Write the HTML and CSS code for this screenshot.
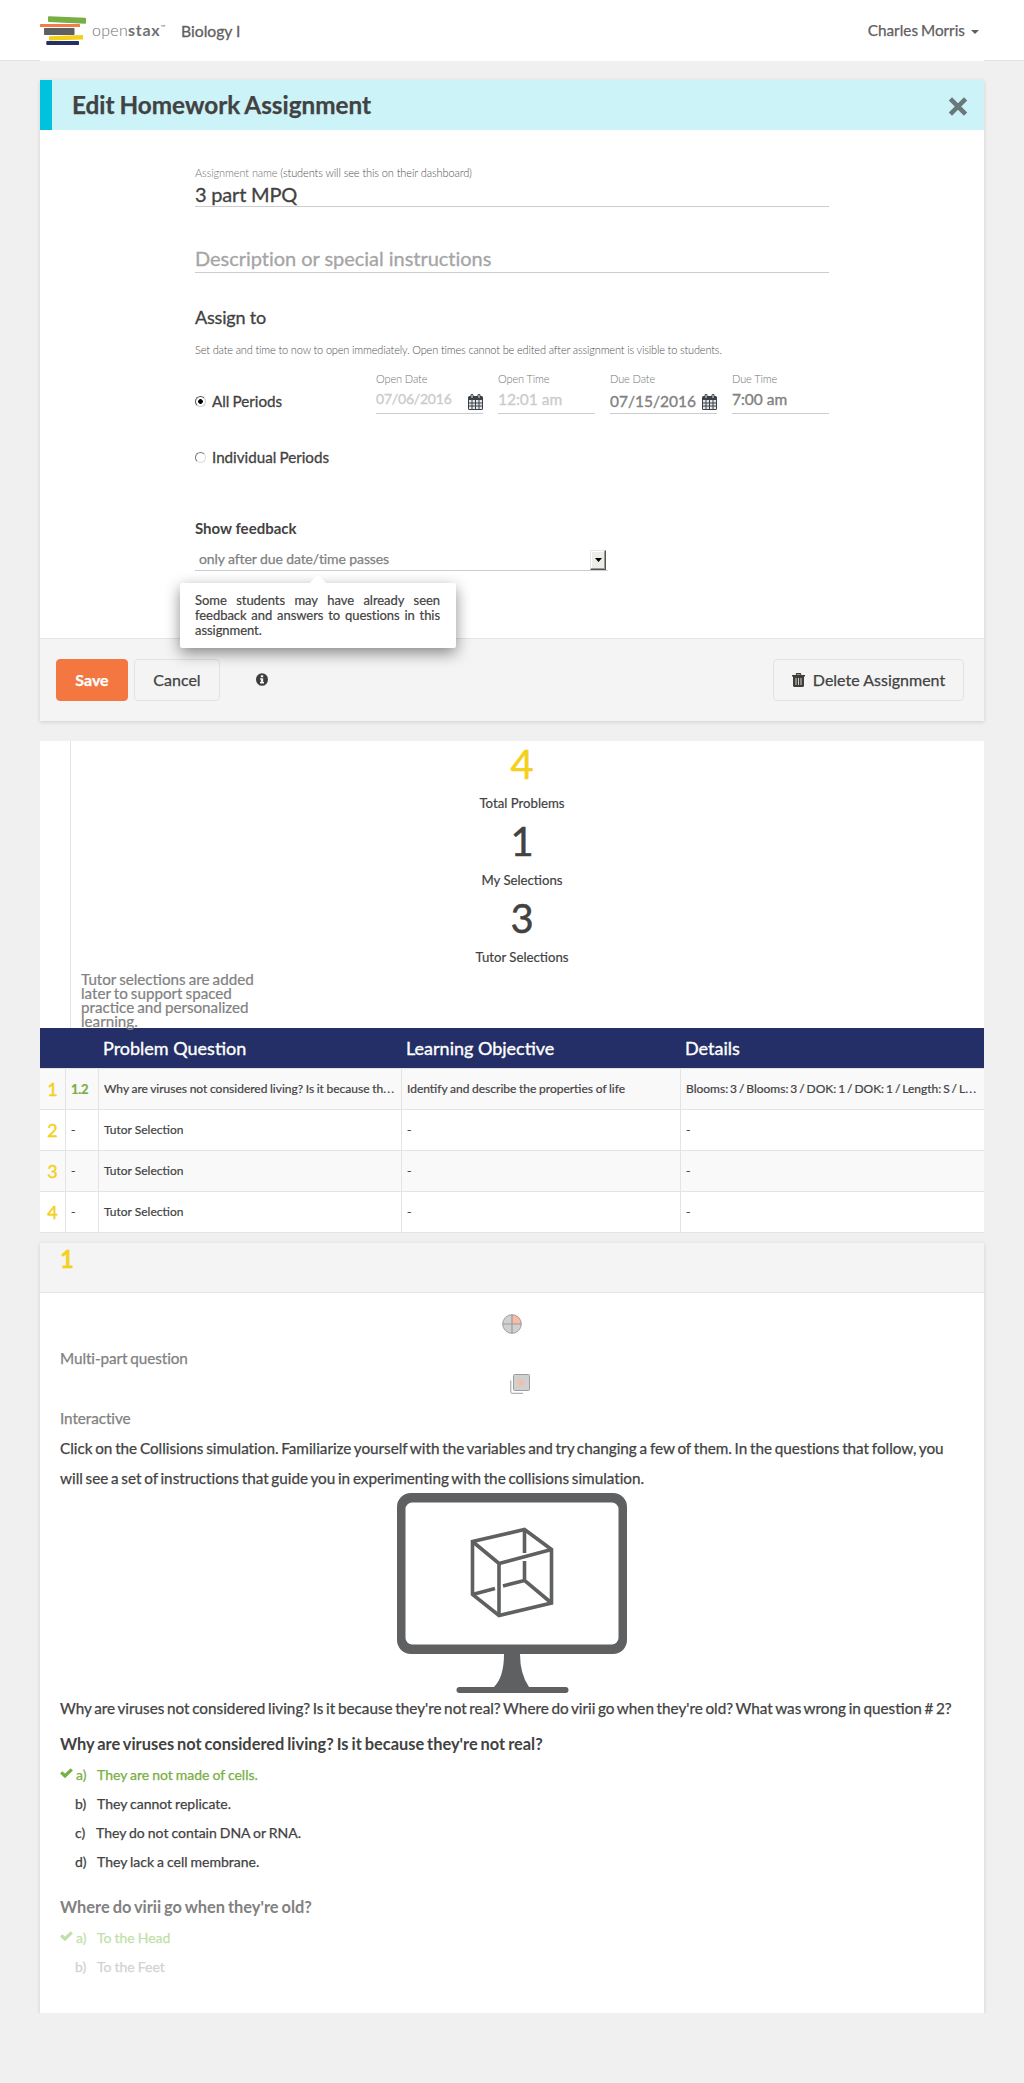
FILE: index.html
```html
<!DOCTYPE html>
<html lang="en">
<head>
<meta charset="utf-8">
<title>Edit Homework Assignment</title>
<link rel="stylesheet" href="styles.css">
</head>
<body>
<header class="navbar">
  <div class="navbar-inner">
    <svg class="logo" width="47" height="30" viewBox="0 0 47 30">
      <path fill="#77af42" d="M9 0.2 L45 1.8 Q46 1.9 46 2.8 L46 6.8 Q46 7.8 45 7.8 L9 6 Q8 6 8 5 L8 1 Q8 0.2 9 0.2Z"/>
      <rect x="0" y="8" width="40" height="3" rx=".5" fill="#f47c4b"/>
      <rect x="4" y="12" width="30.500" height="7" rx=".8" fill="#5f6062"/>
      <path fill="#f4d019" d="M9.500 20.200 L42.500 19 Q43 19 43 19.500 L43 23 Q43 23.600 42.500 23.600 L9.500 24.500 Q9 24.500 9 24 L9 20.800 Q9 20.200 9.500 20.200Z"/>
      <rect x="6.300" y="25" width="32.700" height="4" rx=".7" fill="#232f66"/>
    </svg>
    <span class="brand"><span class="brand-open">open</span><span class="brand-stax">stax</span><sup class="brand-tm">™</sup></span>
    <span class="course">Biology I</span>
    <span class="user">Charles Morris<i class="caret"></i></span>
  </div>
</header>

<main class="container">
  <section class="panel plan">
    <div class="plan-head">
      <h1 class="plan-title">Edit Homework Assignment</h1>
      <svg class="close" width="20" height="19" viewBox="0 0 20 19"><path d="M2.400 1.900 L17.600 17.100 M17.600 1.900 L2.400 17.100" stroke="#697878" stroke-width="4.600" stroke-linecap="butt"/></svg>
    </div>
    <div class="plan-body">
      <div class="small-label">Assignment name <span class="hint">(students will see this on their dashboard)</span></div>
      <div class="text-input name-input">3 part MPQ</div>
      <div class="text-input desc-input">Description or special instructions</div>
      <h2 class="assign-title">Assign to</h2>
      <p class="assign-note">Set date and time to now to open immediately. Open times cannot be edited after assignment is visible to students.</p>
      <div class="period-row">
        <div class="radio-row"><span class="radio checked"></span><span>All Periods</span></div>
        <div class="field"><span class="field-label">Open Date</span><span class="field-value open-date">07/06/2016</span>
          <svg class="calendar" width="15" height="16" viewBox="0 0 15 16"><path fill="#3b4046" d="M0 3.500 Q0 2 1.500 2 H2.500 V1.200 Q2.500 0 4 0 Q5.500 0 5.500 1.200 V2 H9.500 V1.200 Q9.500 0 11 0 Q12.500 0 12.500 1.200 V2 H13.500 Q15 2 15 3.500 V14.500 Q15 16 13.500 16 H1.500 Q0 16 0 14.500Z"/><path stroke="#e8ecf2" stroke-width="1" fill="none" d="M4 1V4M11 1V4"/><path fill="#e4e8ee" d="M1 6h2.500v2.500H1zM4.500 6h2.500v2.500H4.500zM8 6h2.500v2.500H8zM11.500 6h2.500v2.500h-2.500zM1 9.500h2.500v2H1zM4.500 9.500h2.500v2H4.500zM8 9.500h2.500v2H8zM11.500 9.500h2.500v2h-2.500zM1 12.500h2.500v2.500H1zM4.500 12.500h2.500v2.500H4.500zM8 12.500h2.500v2.500H8zM11.500 12.500h2.500v2.500h-2.500z"/></svg></div>
        <div class="field"><span class="field-label">Open Time</span><span class="field-value open-time">12:01 am</span></div>
        <div class="field"><span class="field-label">Due Date</span><span class="field-value due-date">07/15/2016</span>
          <svg class="calendar" width="15" height="16" viewBox="0 0 15 16"><path fill="#3b4046" d="M0 3.500 Q0 2 1.500 2 H2.500 V1.200 Q2.500 0 4 0 Q5.500 0 5.500 1.200 V2 H9.500 V1.200 Q9.500 0 11 0 Q12.500 0 12.500 1.200 V2 H13.500 Q15 2 15 3.500 V14.500 Q15 16 13.500 16 H1.500 Q0 16 0 14.500Z"/><path stroke="#e8ecf2" stroke-width="1" fill="none" d="M4 1V4M11 1V4"/><path fill="#e4e8ee" d="M1 6h2.500v2.500H1zM4.500 6h2.500v2.500H4.500zM8 6h2.500v2.500H8zM11.500 6h2.500v2.500h-2.500zM1 9.500h2.500v2H1zM4.500 9.500h2.500v2H4.500zM8 9.500h2.500v2H8zM11.500 9.500h2.500v2h-2.500zM1 12.500h2.500v2.500H1zM4.500 12.500h2.500v2.500H4.500zM8 12.500h2.500v2.500H8zM11.500 12.500h2.500v2.500h-2.500z"/></svg></div>
        <div class="field"><span class="field-label">Due Time</span><span class="field-value due-time">7:00 am</span></div>
      </div>
      <div class="radio-row individual"><span class="radio"></span><span>Individual Periods</span></div>
      <div class="feedback-title">Show feedback</div>
      <div class="select">
        <span class="select-value">only after due date/time passes</span>
        <span class="select-button"><svg width="7" height="4" viewBox="0 0 7 4"><path d="M0 0h7L3.500 4z"/></svg></span>
        <div class="tooltip">Some students may have already seen feedback and answers to questions in this assignment.</div>
      </div>
    </div>
    <footer class="plan-footer">
      <span class="btn btn-save">Save</span>
      <span class="btn btn-cancel">Cancel</span>
      <svg class="info" width="12" height="13" viewBox="0 0 12 13"><ellipse cx="6" cy="6.500" rx="6" ry="6.300" fill="#3d3d3d"/><path fill="#f4f4f4" d="M4.800 2.200h2.400v2H4.800zM4 5.200h3.200v3.800H8v1.400H4V9h.8V6.500H4z"/></svg>
      <span class="btn btn-delete"><svg width="13" height="14" viewBox="0 0 13 14"><path fill="#3d3d3d" d="M0 2h3.800V1Q3.800 0 4.800 0h3.400Q9.200 0 9.200 1v1H13v1.600h-1V12.500Q12 14 10.500 14h-8Q1 14 1 12.500V3.600H0z"/><path fill="#999" d="M4.800 1h3.400v1H4.800z"/><path stroke="#d8d2c4" d="M4 5v7M6.500 5v7M9 5v7"/></svg>Delete Assignment</span>
    </footer>
  </section>

  <section class="summary">
    <div class="stats">
      <div class="stat-number total">4</div><div class="stat-label">Total Problems</div>
      <div class="stat-number">1</div><div class="stat-label">My Selections</div>
      <div class="stat-number">3</div><div class="stat-label">Tutor Selections</div>
      <p class="tutor-note">Tutor selections are added<br>later to support spaced<br>practice and personalized<br>learning.</p>
    </div>
    <table class="problems">
      <colgroup><col class="col-num"><col class="col-section"><col class="col-question"><col class="col-objective"><col></colgroup>
      <thead><tr><th></th><th></th><th>Problem Question</th><th>Learning Objective</th><th>Details</th></tr></thead>
      <tbody>
        <tr><td class="num">1</td><td class="section">1.2</td><td class="preview">Why are viruses not considered living? Is it because th<span class="dots">...</span></td><td class="objective">Identify and describe the properties of life</td><td class="details">Blooms: 3 / Blooms: 3 / DOK: 1 / DOK: 1 / Length: S / L<span class="dots">...</span></td></tr>
        <tr><td class="num">2</td><td>-</td><td>Tutor Selection</td><td>-</td><td>-</td></tr>
        <tr><td class="num">3</td><td>-</td><td>Tutor Selection</td><td>-</td><td>-</td></tr>
        <tr><td class="num">4</td><td>-</td><td>Tutor Selection</td><td>-</td><td>-</td></tr>
      </tbody>
    </table>
  </section>

  <section class="panel exercise">
    <div class="exercise-head">1</div>
    <div class="exercise-body">
      <div class="icon-row">
        <svg width="20" height="20" viewBox="0 0 20 20"><circle cx="10" cy="10" r="9.300" fill="#d0d0d0"/><path d="M10 10V.7A9.300 9.300 0 0 1 19.300 10z" fill="#fabba2"/><path d="M10 .7V19.300M.7 10H19.300" stroke="#9d9d9f" stroke-width="1.200"/><circle cx="10" cy="10" r="9.300" fill="none" stroke="#9d9d9f"/></svg>
      </div>
      <div class="kind">Multi-part question</div>
      <div class="icon-row interactive-icon">
        <svg width="20" height="20" viewBox="0 0 20 20"><rect x="3.500" y=".5" width="16" height="16" rx="1" fill="#d0d0d0" stroke="#9d9d9f"/><path d="M.8 6.500V18.500Q.8 19.300 1.600 19.300H13" fill="none" stroke="#9d9d9f"/><path d="M8.800 4.200v9l6-4.500z" fill="#fabba2"/></svg>
      </div>
      <div class="kind">Interactive</div>
      <p class="stimulus">Click on the Collisions simulation. Familiarize yourself with the variables and try changing a few of them. In the questions that follow, you<br>will see a set of instructions that guide you in experimenting with the collisions simulation.</p>
      <svg class="monitor" width="230" height="200" viewBox="0 0 230 200">
        <path fill="#5f6062" d="M14 0H216A14 14 0 0 1 230 14V147A14 14 0 0 1 216 161H14A14 14 0 0 1 0 147V14A14 14 0 0 1 14 0ZM15 9.500A6.500 6.500 0 0 0 8.500 16V145A6.500 6.500 0 0 0 15 151.500H215A6.500 6.500 0 0 0 221.500 145V16A6.500 6.500 0 0 0 215 9.500Z" fill-rule="evenodd"/>
        <path fill="#5f6062" d="M107 161H123Q123 181 132 194H97Q107 184 107 161Z"/>
        <rect x="59.500" y="194" width="112" height="6" rx="3" fill="#5f6062"/>
        <g fill="none" stroke="#5f6062" stroke-width="3.600">
          <path d="M75.500 48.500L127.500 36.500L154.500 56.500V110L102 122.500L75.500 101.500Z"/>
          <path d="M75.500 48.500L102 70.500L154.500 56.500M102 70.500V122.500"/>
          <path d="M127.500 36.500V60M127.500 68V87.500L154.500 110M127.500 87.500L106 93M98 95.500L75.500 101.500"/>
        </g>
      </svg>
      <p class="prompt">Why are viruses not considered living? Is it because they're not real? Where do virii go when they're old? What was wrong in question # 2?</p>
      <h3 class="question">Why are viruses not considered living? Is it because they're not real?</h3>
      <ul class="answers">
        <li class="correct"><svg class="check" width="13" height="10" viewBox="0 0 13 10"><path d="M1.200 4.300L5 8L11.800 1.300" fill="none" stroke="currentColor" stroke-width="3.200"/></svg><span class="letter">a)</span>They are not made of cells.</li>
        <li><span class="letter">b)</span>They cannot replicate.</li>
        <li><span class="letter letter-c">c)</span>They do not contain DNA or RNA.</li>
        <li><span class="letter">d)</span>They lack a cell membrane.</li>
      </ul>
      <h3 class="question next">Where do virii go when they're old?</h3>
      <ul class="answers fading">
        <li class="correct"><svg class="check" width="13" height="10" viewBox="0 0 13 10"><path d="M1.200 4.300L5 8L11.800 1.300" fill="none" stroke="currentColor" stroke-width="3.200"/></svg><span class="letter">a)</span>To the Head</li>
        <li><span class="letter">b)</span>To the Feet</li>
      </ul>
    </div>
  </section>
</main>
</body>
</html>
```
FILE: styles.css
```css
* { box-sizing: border-box; }
body { margin: 0; background: #f0f0f0; color: #424242; font-family: Lato, sans-serif; font-size: 15px; }
h1, h2, h3, p, ul { margin: 0; padding: 0; }
ul { list-style: none; }
svg { display: block; flex: none; }

.navbar { height: 61px; background: #fff; border-bottom: 1px solid #e4e4e4; }
.navbar-inner { display: flex; width: 944px; height: 61px; margin: 0 auto; background: #fff; color: #5f6062; white-space: nowrap; }
.logo { margin-top: 16px; }
.brand { width: 89px; padding: 20px 0 0 5px; line-height: 20px; font-size: 16px; color: #6f7072; display: flex; }
.brand-open { font-weight: 300; letter-spacing: .3px; }
.brand-stax { font-weight: 700; letter-spacing: .7px; }
.brand-tm { font-size: 6px; line-height: 14px; }
.course { padding: 19px 0 0 5px; line-height: 24px; font-size: 15.700px; -webkit-text-stroke: .3px; }
.user { display: flex; margin-left: auto; padding: 18px 5px 0 0; line-height: 24px; font-size: 15.300px; word-spacing: -1px; -webkit-text-stroke: .25px; }
.caret { width: 8px; height: 4px; margin: 12px 0 0 6px; background: #5f6062; clip-path: polygon(0 0, 100% 0, 50% 100%); }

.container { width: 944px; margin: 19px auto 0; }
.panel { background: #fff; box-shadow: 0 1px 4px rgba(0, 0, 0, .14); }

.plan { height: 641px; display: flex; flex-direction: column; }
.plan-head { display: flex; height: 50px; padding: 0 16px 0 20px; border-left: 12px solid #00c1de; background: #ccf3f8; justify-content: space-between; }
.plan-title { padding-top: 10px; line-height: 30px; font-size: 24.300px; font-weight: 700; word-spacing: -1px; -webkit-text-stroke: .25px; }
.close { margin-top: 17px; }
.plan-body { flex: 1; width: 634px; margin-left: 155px; padding-top: 35px; }
.small-label { line-height: 16px; font-size: 11px; font-weight: 300; color: #737373; letter-spacing: -.1px; }
.hint { color: #505050; }
.text-input { height: 26px; border-bottom: 1px solid #ccc; font-size: 20px; -webkit-text-stroke: .3px; }
.name-input { line-height: 26px; letter-spacing: -.2px; }
.desc-input { margin-top: 40px; line-height: 22px; color: #a5a5a5; letter-spacing: -.03px; }
.assign-title { margin-top: 32px; line-height: 24px; font-size: 18px; font-weight: 400; letter-spacing: -.2px; -webkit-text-stroke: .3px; }
.assign-note { margin-top: 13px; line-height: 16px; font-size: 11px; font-weight: 300; letter-spacing: -.16px; color: #505050; white-space: nowrap; }
.period-row { display: grid; grid-template-columns: 166px 107px 97px 107px 97px; column-gap: 15px; height: 43px; margin-top: 13px; }
.radio-row { display: flex; align-items: center; height: 24px; gap: 6px; line-height: 24px; font-size: 15.200px; word-spacing: -.8px; -webkit-text-stroke: .3px; }
.period-row .radio-row { margin-top: 18px; }
.radio { width: 11px; height: 11px; border: 1px solid; border-color: #777 #ddd #ddd #777; border-radius: 50%; background: #fff; }
.radio.checked { border-color: #555 #ccc #ccc #555; background: radial-gradient(circle, #000 2px, #fff 2.600px); }
.field { position: relative; display: flex; flex-direction: column; border-bottom: 1px solid #ccc; white-space: nowrap; }
.field-label { line-height: 16px; font-size: 11px; font-weight: 300; letter-spacing: -.12px; color: #737373; }
.field-value { line-height: 24px; font-size: 15.500px; font-weight: 400; -webkit-text-stroke: .35px; }
.open-date { font-size: 14px; letter-spacing: -.2px; color: #ccc; }
.open-time { color: #ccc; }
.due-date { padding-top: 2px; color: #818181; }
.due-time { color: #818181; }
.calendar { position: absolute; right: 0; bottom: 3px; }
.individual { margin-top: 31px; }
.feedback-title { margin-top: 47px; line-height: 24px; font-size: 15px; font-weight: 700; }
.select { position: relative; display: flex; width: 413px; height: 31px; border-bottom: 1px solid #ccc; }
.select-value { flex: 1; padding: 8px 0 0 4px; line-height: 22px; font-size: 14px; letter-spacing: -.1px; color: #818181; -webkit-text-stroke: .25px; }
.select-button { display: flex; align-items: center; justify-content: center; width: 16px; height: 20px; margin: 10px 2px 0 0; background: #eeece9; border: 1px solid; border-color: #e8e6e3 #555 #555 #e8e6e3; box-shadow: inset -1px -1px #999, inset 1px 1px #fff; }
.tooltip { position: absolute; left: -15px; top: 43px; z-index: 2; width: 276px; height: 65px; padding: 10px 16px 10px 15px; border-radius: 2px; background: #fff; box-shadow: 0 5px 15px rgba(0, 0, 0, .45); line-height: 15px; font-size: 13px; letter-spacing: -.05px; text-align: justify; -webkit-text-stroke: .2px; }
.tooltip::before { content: ""; position: absolute; left: 129px; top: -9px; width: 18px; height: 10px; background: #fff; clip-path: polygon(0 100%, 50% 0, 100% 100%); }
.plan-footer { display: flex; height: 83px; padding: 20px 20px 0 16px; border-top: 1px solid #e4e4e4; background: #f4f4f4; }
.btn { display: flex; justify-content: center; height: 42px; line-height: 40px; border: 1px solid #e2e2e2; border-radius: 4px; font-size: 16px; -webkit-text-stroke: .25px; }
.btn-save { width: 72px; border-color: #f47641; background: #f47641; color: #fff; font-weight: 700; }
.btn-cancel { width: 86px; margin-left: 6px; }
.info { margin: 14px 0 0 36px; }
.btn-delete { width: 191px; margin-left: auto; gap: 8px; }
.btn-delete svg { margin-top: 13px; }

.summary { margin-top: 20px; background: #fff; }
.stats { height: 287px; margin-left: 30px; padding-right: 11px; border-left: 1px solid #e4e4e4; text-align: center; }
.stat-number { height: 46px; line-height: 46px; font-size: 40px; -webkit-text-stroke: .5px; }
.stat-number.total { color: #f4d019; }
.stat-label { height: 31px; line-height: 33px; font-size: 13.200px; -webkit-text-stroke: .2px; }
.tutor-note { position: relative; padding-left: 10px; line-height: 14px; font-size: 15.200px; word-spacing: -.8px; text-align: left; color: #818181; -webkit-text-stroke: .2px; }
.problems { width: 944px; table-layout: fixed; border-spacing: 0; border-bottom: 1px solid #e4e4e4; font-size: 12px; }
.col-num { width: 26px; }
.col-section { width: 33px; }
.col-question { width: 303px; }
.col-objective { width: 279px; }
.problems th { height: 40px; padding: 0 0 0 4px; background: #232f66; color: #fff; line-height: 20px; font-size: 18px; font-weight: 400; text-align: left; -webkit-text-stroke: .35px; }
.problems td { height: 41px; padding: 0 0 0 5px; border-top: 1px solid #e4e4e4; border-right: 1px solid #e4e4e4; line-height: 20px; white-space: nowrap; -webkit-text-stroke: .2px; }
.problems td:last-child { border-right: 0; }
.problems tbody tr:nth-child(odd) { background: #f9f9f9; }
.problems td.num { padding: 0; font-size: 18px; color: #f4d019; text-align: center; -webkit-text-stroke: .4px; }
.problems td.section { font-size: 13px; font-weight: 700; letter-spacing: -.3px; color: #77af42; }
.problems td.preview { word-spacing: -.45px; }
.problems td.objective { word-spacing: -.4px; }
.problems td.details { word-spacing: -1.150px; }
.dots { letter-spacing: 1.200px; }

.exercise { height: 770px; margin-top: 10px; }
.exercise-head { height: 50px; padding: 1px 20px; border-bottom: 1px solid #e4e4e4; background: #f4f4f4; color: #f4d019; line-height: 30px; font-size: 24px; font-weight: 700; -webkit-text-stroke: .3px; }
.exercise-body { padding: 20px; line-height: 30px; font-size: 15.300px; white-space: nowrap; -webkit-text-stroke: .25px; }
.icon-row { display: flex; justify-content: center; height: 30px; padding-top: 1px; }
.interactive-icon { padding-left: 16px; }
.kind { color: #818181; word-spacing: -1px; letter-spacing: -.08px; }
.stimulus { letter-spacing: -.02px; word-spacing: -1.150px; }
.prompt { word-spacing: -1.300px; }
.monitor { margin: 0 auto; }
.question { margin-top: 6px; font-size: 16.400px; font-weight: 700; word-spacing: -1.050px; -webkit-text-stroke: 0; }
.question.next { margin-top: 16px; color: #818181; }
.answers { padding: 1px 0 0; line-height: 29px; font-size: 14px; word-spacing: -.6px; }
.answers li { display: flex; padding-left: 15px; }
.answers li.correct { padding-left: 0; color: #77af42; }
.check { margin: 8px 3px 0 0; }
.letter { width: 22px; }
.letter-c { width: 21px; }
.correct .letter { width: 21px; }
.fading li { color: #d2d2d2; }
.answers.fading li.correct { color: #c1dfa9; }
```
